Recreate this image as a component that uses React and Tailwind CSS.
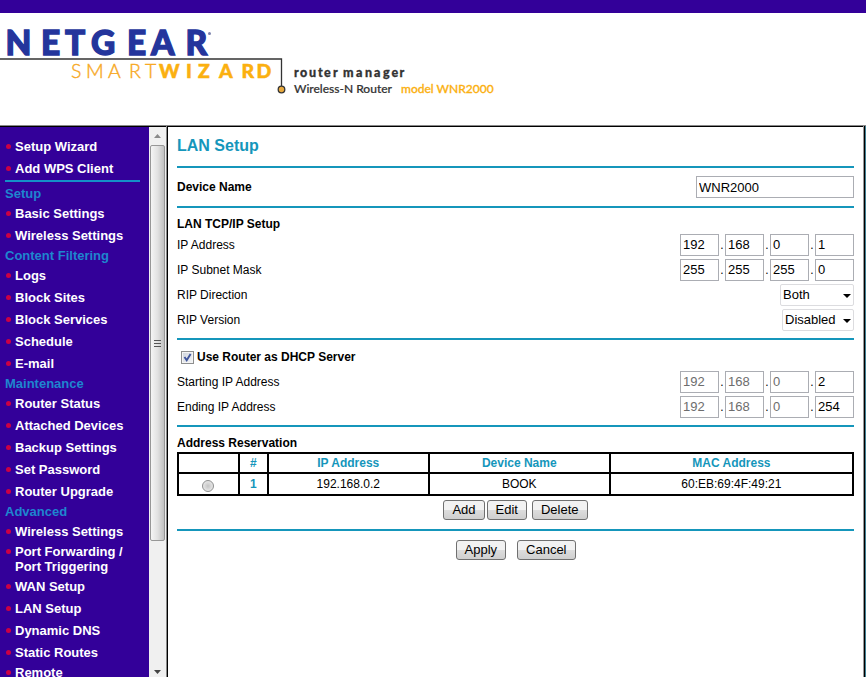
import { useState } from 'react';

const menu = [
  {
    title: '',
    items: ['Setup Wizard', 'Add WPS Client'],
  },
  {
    title: 'Setup',
    items: ['Basic Settings', 'Wireless Settings'],
  },
  {
    title: 'Content Filtering',
    items: ['Logs', 'Block Sites', 'Block Services', 'Schedule', 'E-mail'],
  },
  {
    title: 'Maintenance',
    items: ['Router Status', 'Attached Devices', 'Backup Settings', 'Set Password', 'Router Upgrade'],
  },
  {
    title: 'Advanced',
    items: [
      'Wireless Settings',
      'Port Forwarding / Port Triggering',
      'WAN Setup',
      'LAN Setup',
      'Dynamic DNS',
      'Static Routes',
      'Remote Management',
    ],
  },
];

const reservations = [
  { id: 1, ip: '192.168.0.2', device: 'BOOK', mac: '60:EB:69:4F:49:21' },
];

const Logo = () => (
  <svg width="520" height="112" viewBox="0 0 520 112" className="block" fontFamily="Lato, sans-serif">
    <text x="5.5 41 65 91 127 151 185.500" y="42" fontSize="33.500" fontWeight="900" fill="#24359c" stroke="#24359c" strokeWidth="1.300">NETGEAR</text>
    <circle cx="209.500" cy="20.500" r="1.500" fill="#7d84ad" />
    <text x="71 86 108 129 145" y="65" fontSize="19.500" fontWeight="300" fill="#f7a823" stroke="#f7a823" strokeWidth="0.400">SMART</text>
    <text x="159 186 198 219 241.500 256.500" y="65" fontSize="19.500" fontWeight="900" fill="#fbb010" stroke="#fbb010" strokeWidth="0.500">WIZARD</text>
    <path d="M0 46H281.500V73" fill="none" stroke="#333" strokeWidth="1.300" />
    <circle cx="281.500" cy="76.500" r="3.300" fill="#e8a93c" stroke="#333" strokeWidth="1.300" />
    <text x="294 300 309 318 324 333 340 343 356 365 374 383 391.500 399.500" y="64" fontSize="12.500" fontWeight="900" fill="#333" stroke="#333" strokeWidth="0.300">router manager</text>
    <text x="294" y="80" fontSize="12" fontWeight="500" fill="#333" stroke="#333" strokeWidth="0.200">Wireless-N Router</text>
    <text x="401" y="80" fontSize="12" fontWeight="500" fill="#fbb010" stroke="#fbb010" strokeWidth="0.300">model WNR2000</text>
  </svg>
);

const MenuItem = ({ label }) => (
  <li className="flex min-h-[22px] pt-1 pb-[3px] has-[.wrap]:pt-[2px] has-[.wrap]:pb-px">
    <span className="mt-[5px] mr-1 h-[5px] w-[5px] shrink-0 rounded-full bg-[#cc0044]" />
    <a href="#" className={`max-w-[120px] text-white ${label.length > 16 && label !== 'Wireless Settings' ? 'wrap' : ''}`}>
      {label}
    </a>
  </li>
);

const Sidebar = () => (
  <nav className="min-w-0 flex-1 overflow-hidden bg-[#330099] pt-2 pr-[9px] pl-[5px] text-[13px] leading-[15px] font-bold">
    {menu.map((group) => (
      <div key={group.title}>
        {group.title && <h2 className="pt-px leading-[17px] text-[#1e86cf]">{group.title}</h2>}
        <ul className="pl-px">
          {group.items.map((item) => (
            <MenuItem key={item} label={item} />
          ))}
        </ul>
        {!group.title && <hr className="mt-px mb-0.5 border-0 border-t-2 border-[#1490c8]" />}
      </div>
    ))}
  </nav>
);

const Scrollbar = () => (
  <div className="flex w-[17px] shrink-0 flex-col items-center bg-[#f0f0f0]" aria-hidden="true">
    <svg width="17" height="18" viewBox="0 0 17 18" className="shrink-0">
      <path d="M5 11L8.500 7L12 11Z" fill="#8a8a8a" />
    </svg>
    <div className="flex h-[72%] w-[15px] flex-col items-center justify-center gap-0.5 rounded-[2px] border border-[#979797] bg-linear-to-r from-[#f5f5f5] via-[#e2e2e2] to-[#c2c2c2]">
      <span className="h-px w-[7px] bg-[#555]" />
      <span className="h-px w-[7px] bg-[#555]" />
      <span className="h-px w-[7px] bg-[#555]" />
    </div>
    <svg width="17" height="12" viewBox="0 0 17 12" className="mt-auto shrink-0">
      <path d="M5 5L8.500 9L12 5Z" fill="#444" />
    </svg>
  </div>
);

const Row = ({ label, htmlFor, children }) => (
  <div className="flex h-[25px] items-center justify-between">
    <label htmlFor={htmlFor}>{label}</label>
    {children}
  </div>
);

const IpInput = ({ id, name, value, onChange, locked = 0 }) => (
  <div className="flex items-center">
    {value.map((part, i) => (
      <div key={i} className="flex items-center">
        {i > 0 && <span className="w-[6px] text-center">.</span>}
        <input
          type="text"
          id={i === 0 ? id : undefined}
          aria-label={`${name} ${i + 1}`}
          value={part}
          disabled={i < locked}
          maxLength={3}
          onChange={(e) => onChange(value.map((p, n) => (n === i ? e.target.value : p)))}
          className="h-[22px] w-[39px] border border-[#abadb3] bg-white px-0.5 text-[13px] text-black disabled:text-[#6d6d6d]"
        />
      </div>
    ))}
  </div>
);

const Select = ({ id, options, className }) => (
  <div className={`relative ${className}`}>
    <select
      id={id}
      className="block h-[22px] w-full appearance-none rounded-[2px] border border-[#dcdcdf] bg-white pl-0.5 text-[13px]"
    >
      {options.map((option) => (
        <option key={option}>{option}</option>
      ))}
    </select>
    <svg width="8" height="4" viewBox="0 0 8 4" className="pointer-events-none absolute top-[10px] right-[3px]">
      <path d="M0 0H8L4 4Z" fill="#000" />
    </svg>
  </div>
);

const Button = ({ children, className = '' }) => (
  <button
    type="button"
    className={`h-[20px] rounded-[3px] border border-[#707070] bg-linear-to-b from-[#f2f2f2] from-50% via-[#dddddd] via-50% to-[#cfcfcf] px-2 text-[13px] leading-[18px] ${className}`}
  >
    {children}
  </button>
);

const Divider = () => <hr className="border-0 border-t-2 border-[#1596bb]" />;

const LanSetup = () => {
  const [deviceName, setDeviceName] = useState('WNR2000');
  const [ip, setIp] = useState(['192', '168', '0', '1']);
  const [mask, setMask] = useState(['255', '255', '255', '0']);
  const [dhcp, setDhcp] = useState(true);
  const [start, setStart] = useState(['192', '168', '0', '2']);
  const [end, setEnd] = useState(['192', '168', '0', '254']);

  return (
    <form className="px-[9px] text-xs leading-4 text-black">
      <h1 className="pt-[9px] pb-[10px] text-base leading-5 font-bold text-[#1596bb]">LAN Setup</h1>
      <Divider />

      <div className="flex h-[38px] items-center justify-between">
        <label htmlFor="device" className="font-bold">Device Name</label>
        <input
          id="device"
          type="text"
          value={deviceName}
          onChange={(e) => setDeviceName(e.target.value)}
          className="h-[22px] w-[158px] border border-[#abadb3] px-0.5 text-[13px]"
        />
      </div>
      <Divider />

      <div className="pt-2 pb-1.5">
        <h2 className="font-bold">LAN TCP/IP Setup</h2>
        <Row label="IP Address" htmlFor="ip">
          <IpInput id="ip" name="IP Address" value={ip} onChange={setIp} />
        </Row>
        <Row label="IP Subnet Mask" htmlFor="mask">
          <IpInput id="mask" name="IP Subnet Mask" value={mask} onChange={setMask} />
        </Row>
        <Row label="RIP Direction" htmlFor="rip-direction">
          <Select id="rip-direction" options={['Both', 'Out Only', 'In Only']} className="w-[74px]" />
        </Row>
        <Row label="RIP Version" htmlFor="rip-version">
          <Select id="rip-version" options={['Disabled', 'RIP-1', 'RIP-2B', 'RIP-2M']} className="w-[72px]" />
        </Row>
      </div>
      <Divider />

      <div className="pt-2 pb-1.5">
        <label className="flex items-center gap-[3px] pb-[3px] pl-1 leading-[18px] font-bold">
          <span className="relative h-[13px] w-[13px]">
            <input
              type="checkbox"
              checked={dhcp}
              onChange={(e) => setDhcp(e.target.checked)}
              className="peer block h-[13px] w-[13px] appearance-none border border-[#8e8f8f] bg-linear-to-br from-[#cdd3dc] to-[#f6f6f6] outline-1 -outline-offset-2 outline-[#f4f4f4]"
            />
            <svg viewBox="0 0 13 13" className="pointer-events-none absolute inset-0 hidden peer-checked:block">
              <path d="M3.500 6L5.700 9.300L9.600 3" fill="none" stroke="#3f559c" strokeWidth="1.900" />
            </svg>
          </span>
          Use Router as DHCP Server
        </label>
        <Row label="Starting IP Address" htmlFor="start">
          <IpInput id="start" name="Starting IP Address" value={start} onChange={setStart} locked={3} />
        </Row>
        <Row label="Ending IP Address" htmlFor="end">
          <IpInput id="end" name="Ending IP Address" value={end} onChange={setEnd} locked={3} />
        </Row>
      </div>
      <Divider />

      <h2 className="pt-2 pb-px font-bold">Address Reservation</h2>
      <table className="w-full table-fixed border-collapse border-2 border-black text-center">
        <thead>
          <tr className="h-[20px] text-[#1596bb]">
            <th className="w-[9%] border-2 border-black" />
            <th className="w-[29px] border-2 border-black">#</th>
            <th className="w-[161px] border-2 border-black">IP Address</th>
            <th className="w-[181px] border-2 border-black">Device Name</th>
            <th className="border-2 border-black">MAC Address</th>
          </tr>
        </thead>
        <tbody>
          {reservations.map((row) => (
            <tr key={row.id} className="h-[22px]">
              <td className="border-2 border-black">
                <input
                  type="radio"
                  name="reservation"
                  aria-label={row.device}
                  className="mx-auto mt-1 block h-3 w-3 appearance-none rounded-full border border-[#8e8f8f] bg-[radial-gradient(#c4c4c4,#f4f4f4)] checked:bg-[#3f559c]"
                />
              </td>
              <td className="border-2 border-black font-bold text-[#1596bb]">{row.id}</td>
              <td className="border-2 border-black">{row.ip}</td>
              <td className="border-2 border-black">{row.device}</td>
              <td className="border-2 border-black">{row.mac}</td>
            </tr>
          ))}
        </tbody>
      </table>

      <div className="flex justify-center pt-1 pb-[9px]">
        <Button className="mr-0.5">Add</Button>
        <Button className="mr-[5px]">Edit</Button>
        <Button>Delete</Button>
      </div>
      <Divider />

      <div className="flex justify-center gap-[11px] pt-[9px] pb-4">
        <Button>Apply</Button>
        <Button>Cancel</Button>
      </div>
    </form>
  );
};

const App = () => {
  return (
    <div className="flex h-screen flex-col overflow-hidden bg-white font-['Liberation_Sans',Arial,sans-serif]">
      <header className="shrink-0 border-t-[13px] border-[#330099]">
        <Logo />
      </header>
      <div className="flex min-h-0 flex-1 border-t border-[#888]">
        <div className="flex w-[166px] shrink-0 border-t border-black">
          <Sidebar />
          <Scrollbar />
        </div>
        <div className="w-px shrink-0 bg-[#888]" />
        <main className="min-w-0 flex-1 overflow-hidden border-t border-l border-black">
          <LanSetup />
        </main>
        <div className="w-[3px] shrink-0 border-r border-l border-r-[#3f7f92] border-l-[#999] bg-black" />
      </div>
    </div>
  );
};

export default App;
